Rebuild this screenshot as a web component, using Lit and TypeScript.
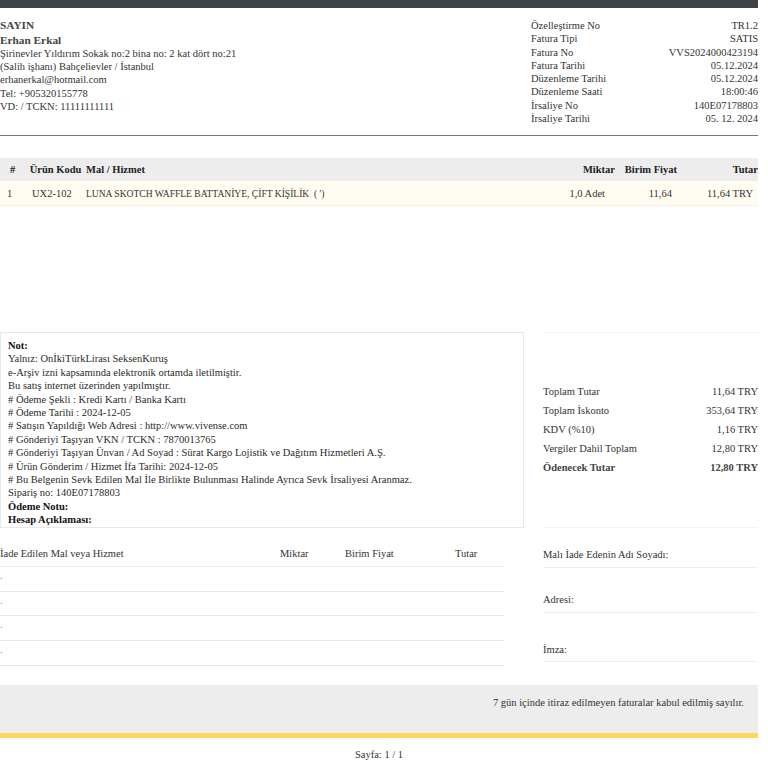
import { customElement } from "lit/decorators.js";
import { html, css, LitElement } from "lit";

const META = [
  ["Özelleştirme No", "TR1.2"],
  ["Fatura Tipi", "SATIS"],
  ["Fatura No", "VVS2024000423194"],
  ["Fatura Tarihi", "05.12.2024"],
  ["Düzenleme Tarihi", "05.12.2024"],
  ["Düzenleme Saati", "18:00:46"],
  ["İrsaliye No", "140E07178803"],
  ["İrsaliye Tarihi", "05. 12. 2024"],
];

const NOTES = [
  "Yalnız: OnİkiTürkLirası SeksenKuruş",
  "e-Arşiv izni kapsamında elektronik ortamda iletilmiştir.",
  "Bu satış internet üzerinden yapılmıştır.",
  "# Ödeme Şekli : Kredi Kartı / Banka Kartı",
  "# Ödeme Tarihi : 2024-12-05",
  "# Satışın Yapıldığı Web Adresi : http://www.vivense.com",
  "# Gönderiyi Taşıyan VKN / TCKN : 7870013765",
  "# Gönderiyi Taşıyan Ünvan / Ad Soyad : Sürat Kargo Lojistik ve Dağıtım Hizmetleri A.Ş.",
  "# Ürün Gönderim / Hizmet İfa Tarihi: 2024-12-05",
  "# Bu Belgenin Sevk Edilen Mal İle Birlikte Bulunması Halinde Ayrıca Sevk İrsaliyesi Aranmaz.",
  "Sipariş no: 140E07178803",
];

const TOTALS = [
  ["Toplam Tutar", "11,64 TRY"],
  ["Toplam İskonto", "353,64 TRY"],
  ["KDV (%10)", "1,16 TRY"],
  ["Vergiler Dahil Toplam", "12,80 TRY"],
];

@customElement("app-root")
export class AppRoot extends LitElement {
  static styles = css`
    * {
      box-sizing: border-box;
    }

    :host {
      display: block;
      width: 768px;
      height: 768px;
      overflow: hidden;
      background: #fff;
      color: #333;
      font-family: "Liberation Serif", "Times New Roman", serif;
      font-size: 10.5px;
      line-height: 13.3px;
    }

    .page {
      width: 758px;
    }

    .topbar {
      height: 8px;
      background: #3c4349;
    }

    .head {
      display: flex;
      justify-content: space-between;
      height: 128px;
      padding-top: 11px;
      border-bottom: 1px solid #777;
    }

    .buyer b {
      display: block;
      font-size: 11.3px;
      color: #444;
    }

    .buyer b:first-child {
      height: 14.5px;
    }

    .meta {
      width: 227px;
    }

    .pair {
      display: flex;
      justify-content: space-between;
    }

    .items {
      margin-top: 22px;
      height: 174px;
    }

    .items-row {
      display: grid;
      grid-template-columns: 25px 61px 1fr 70px 62px 81px;
      align-items: center;
    }

    .items-head {
      height: 23px;
      background: #ededed;
      color: #222;
      font-weight: bold;
    }

    .items-body {
      height: 25px;
      padding-top: 2px;
      background: #fffdf1;
      border-bottom: 1px solid #f3efdc;
    }

    .items-head .c {
      text-align: center;
    }

    .items-head .r {
      text-align: right;
    }

    .items-body .first {
      padding-left: 7px;
    }

    .items-body .code {
      padding-left: 7px;
    }

    .items-body .name {
      font-size: 9.55px;
    }

    .items-body .qty {
      padding-right: 10px;
      text-align: right;
    }

    .items-body .price {
      padding-right: 5px;
      text-align: right;
    }

    .items-body .sum {
      padding-right: 5px;
      text-align: right;
    }

    .mid {
      display: flex;
      justify-content: space-between;
      height: 196px;
    }

    .notes {
      width: 524px;
      height: 196px;
      padding: 6px 6px 0 7px;
      border: 1px solid #e8e8e8;
      color: #2a2a2a;
      line-height: 13.4px;
      overflow: hidden;
    }

    .notes b {
      color: #111;
      display: block;
    }

    .totals {
      width: 215px;
      padding-top: 49px;
      border-top: 1px solid #f2f2f2;
      border-bottom: 1px solid #f2f2f2;
    }

    .totals .pair {
      height: 19px;
      align-items: center;
    }

    .strong {
      font-weight: bold;
      color: #444;
    }

    .lower {
      display: flex;
      justify-content: space-between;
      height: 157px;
    }

    .ret {
      width: 504px;
      padding-top: 19px;
    }

    .ret-head {
      display: grid;
      grid-template-columns: 280px 65px 110px 1fr;
      height: 20px;
      border-bottom: 1px solid #eee;
    }

    .ret-row {
      height: 24.7px;
      padding-top: 2px;
      border-bottom: 1px solid #e8e8e8;
      color: #888;
    }

    .sign {
      width: 215px;
      padding-top: 20px;
    }

    .sign-row {
      border-bottom: 1px solid #eee;
      margin-bottom: 25px;
      height: 20px;
    }

    .sign-row.tall {
      margin-bottom: 30px;
    }

    .sign-row.last {
      margin-bottom: 0;
      height: 19px;
    }

    .notice {
      height: 53px;
      padding: 11px 14px 0 0;
      background: #ededed;
      border-bottom: 5px solid #fbd75e;
      text-align: right;
    }

    .pager {
      margin-top: 10px;
      text-align: center;
    }
  `;

  render() {
    return html`
      <div class="page">
        <div class="topbar"></div>

        <div class="head">
          <div class="buyer">
            <b>SAYIN</b>
            <b>Erhan Erkal</b>
            Şirinevler Yıldırım Sokak no:2 bina no: 2 kat dört no:21<br />
            (Salih işhanı) Bahçelievler / İstanbul<br />
            erhanerkal@hotmail.com<br />
            Tel: +905320155778<br />
            VD: / TCKN: 11111111111
          </div>
          <div class="meta">
            ${META.map(([k, v]) => html`<div class="pair"><span>${k}</span><span>${v}</span></div>`)}
          </div>
        </div>

        <div class="items">
          <div class="items-row items-head">
            <span class="c">#</span>
            <span class="c">Ürün Kodu</span>
            <span>Mal / Hizmet</span>
            <span class="r">Miktar</span>
            <span class="r">Birim Fiyat</span>
            <span class="r">Tutar</span>
          </div>
          <div class="items-row items-body">
            <span class="first">1</span>
            <span class="code">UX2-102</span>
            <span class="name">LUNA SKOTCH WAFFLE BATTANİYE, ÇİFT KİŞİLİK &nbsp;( ')</span>
            <span class="qty">1,0 Adet</span>
            <span class="price">11,64</span>
            <span class="sum">11,64 TRY</span>
          </div>
        </div>

        <div class="mid">
          <div class="notes">
            <b>Not:</b>
            ${NOTES.map((n) => html`<div>${n}</div>`)}
            <b>Ödeme Notu:</b>
            <b>Hesap Açıklaması:</b>
          </div>
          <div class="totals">
            ${TOTALS.map(([k, v]) => html`<div class="pair"><span>${k}</span><span>${v}</span></div>`)}
            <div class="pair strong"><span>Ödenecek Tutar</span><span>12,80 TRY</span></div>
          </div>
        </div>

        <div class="lower">
          <div class="ret">
            <div class="ret-head">
              <span>İade Edilen Mal veya Hizmet</span>
              <span>Miktar</span>
              <span>Birim Fiyat</span>
              <span>Tutar</span>
            </div>
            ${[0, 1, 2, 3].map(() => html`<div class="ret-row">.</div>`)}
          </div>
          <div class="sign">
            <div class="sign-row">Malı İade Edenin Adı Soyadı:</div>
            <div class="sign-row tall">Adresi:</div>
            <div class="sign-row last">İmza:</div>
          </div>
        </div>

        <div class="notice">7 gün içinde itiraz edilmeyen faturalar kabul edilmiş sayılır.</div>
        <div class="pager">Sayfa: 1 / 1</div>
      </div>
    `;
  }
}
